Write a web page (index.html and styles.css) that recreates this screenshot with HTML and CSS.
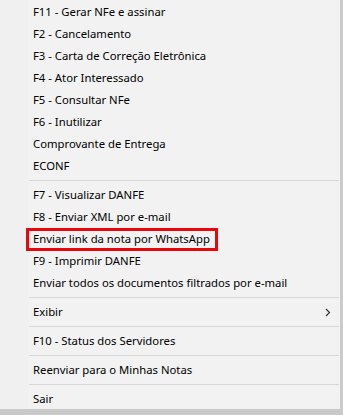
FILE: index.html
```html
<!DOCTYPE html>
<html lang="pt">
<head>
<meta charset="utf-8">
<link rel="stylesheet" href="styles.css">
</head>
<body>
<div class="menu">
  <div class="item">F11 - Gerar NFe e assinar</div>
  <div class="item">F2 - Cancelamento</div>
  <div class="item">F3 - Carta de Correção Eletrônica</div>
  <div class="item">F4 - Ator Interessado</div>
  <div class="item">F5 - Consultar NFe</div>
  <div class="item">F6 - Inutilizar</div>
  <div class="item">Comprovante de Entrega</div>
  <div class="item">ECONF</div>
  <div class="sep"></div>
  <div class="item">F7 - Visualizar DANFE</div>
  <div class="item">F8 - Enviar XML por e-mail</div>
  <div class="item marked">Enviar link da nota por WhatsApp</div>
  <div class="item">F9 - Imprimir DANFE</div>
  <div class="item">Enviar todos os documentos filtrados por e-mail</div>
  <div class="sep"></div>
  <div class="item sub"><span>Exibir</span>
    <svg class="chev" width="6" height="9" viewBox="0 0 6 9"><polyline points="1,1 4.5,4.5 1,8" fill="none" stroke="#333" stroke-width="1.2"/></svg>
  </div>
  <div class="sep"></div>
  <div class="item">F10 - Status dos Servidores</div>
  <div class="sep"></div>
  <div class="item">Reenviar para o Minhas Notas</div>
  <div class="sep"></div>
  <div class="item">Sair</div>
</div>
</body>
</html>
```
FILE: styles.css
```css
html, body {
  margin: 0;
  padding: 0;
  background: #c9c9c9;
}
body {
  width: 343px;
  height: 415px;
  overflow: hidden;
}
.menu {
  width: 340px;
  height: 408px;
  background: linear-gradient(to right, #f0f0f0 0 28px, #f2f2f2 28px);
  border-right: 3px solid #cbcbcb;
  border-bottom: 7px solid #c9c9c9;
  box-sizing: content-box;
  display: flex;
  flex-direction: column;
  padding-top: 1px;
  font-family: "Noto Sans", "Open Sans", sans-serif;
  font-size: 11.3px;
  color: #000;
}
.item {
  height: 22px;
  line-height: 22px;
  padding-left: 33px;
  white-space: nowrap;
  position: relative;
  flex: none;
}
.sub {
  display: flex;
  align-items: center;
  justify-content: space-between;
  padding-right: 9px;
}
.chev {
  display: block;
}
.sep {
  flex: none;
  height: 1px;
  margin: 3px 1px 3px 29px;
  background: #d7d7d7;
}
.marked::after {
  content: "";
  position: absolute;
  left: 26px;
  top: 0;
  width: 186px;
  height: 17px;
  border: 3px solid #e8070d;
}
```
